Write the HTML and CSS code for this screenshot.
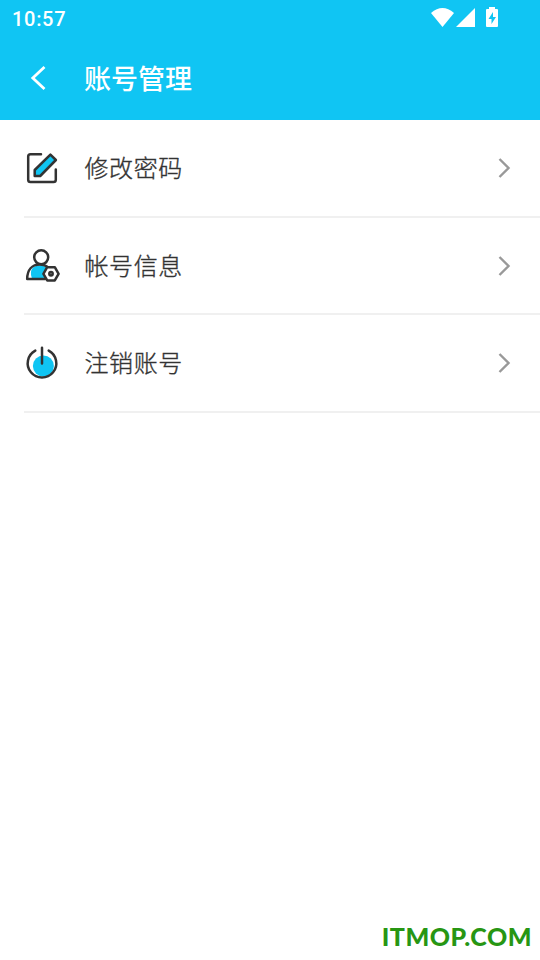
FILE: index.html
```html
<!DOCTYPE html>
<html lang="zh-CN">
<head>
<meta charset="utf-8">
<title>账号管理</title>
<link rel="stylesheet" href="styles.css">
</head>
<body>
<header class="header">
  <div class="status">
    <span class="time">10:57</span>
    <svg class="status-icons" width="70" height="36" viewBox="430 0 70 36" fill="#fff">
      <path d="M442.5 27 431 13Q442.500 3 454 13Z"/>
      <path d="M475 8V27H456Z"/>
      <path fill-rule="evenodd" d="M489 7h6v2h2q1 0 1 1v16q0 1-1 1h-10q-1 0-1-1v-16q0-1 1-1h2ZM493 12l-4.500 7h3v5l4.500-7h-3Z"/>
    </svg>
  </div>
  <div class="titlebar">
    <svg class="back" width="20" height="30" viewBox="0 0 20 30"><path d="M16.500 4 4.800 15l11.700 11"/></svg>
    <h1 class="title">账号管理</h1>
  </div>
</header>
<main class="list">
  <div class="row">
    <svg class="icon" width="36" height="36" viewBox="24 150 36 36">
      <path d="M41 154.300H30.500Q28.200 154.300 28.200 156.600V179.700Q28.200 182 30.500 182H53.500Q55.800 182 55.800 179.700V169.500"/>
      <path class="accent" d="M34.700 176V170L50.400 154.600 55.900 160 40.200 176Z"/>
    </svg>
    <span class="label">修改密码</span>
    <svg class="arrow" width="14" height="24" viewBox="0 0 14 24"><path d="M1.500 3l9 9-9 9"/></svg>
  </div>
  <div class="row row-info">
    <svg class="icon" width="36" height="36" viewBox="24 248 36 36">
      <path class="fill" d="M31.800 278Q29.500 271.500 33 267.500 36 265 42 265.500L47 267.500 43.500 273 46 278Z"/>
      <circle cx="41.200" cy="257.300" r="7"/>
      <path d="M45 279H27.200C27.200 270 32 264.500 40 264.500Q44 264.500 47 266.500"/>
      <path class="hex" d="M47.200 267.200H54.800L58.600 273.800 54.800 280.400H47.200L43.400 273.800Z"/>
      <circle cx="51" cy="273.800" r="1.700"/>
    </svg>
    <span class="label">帐号信息</span>
    <svg class="arrow" width="14" height="24" viewBox="0 0 14 24"><path d="M1.500 3l9 9-9 9"/></svg>
  </div>
  <div class="row">
    <svg class="icon" width="36" height="36" viewBox="24 345 36 36">
      <circle class="fill" cx="43.400" cy="366" r="10.500"/>
      <path d="M35.300 350.600A14.300 14.300 0 1 0 48.700 350.600M42 347.800V363.500"/>
    </svg>
    <span class="label">注销账号</span>
    <svg class="arrow" width="14" height="24" viewBox="0 0 14 24"><path d="M1.500 3l9 9-9 9"/></svg>
  </div>
</main>
<footer class="brand">ITMOP.COM</footer>
</body>
</html>
```
FILE: styles.css
```css
* { box-sizing: border-box; }
body {
  margin: 0;
  height: 960px;
  display: flex;
  flex-direction: column;
  overflow: hidden;
  background: #fff;
  color: #333;
  font-family: "Noto Sans CJK SC", sans-serif;
}
.header { height: 120px; background: #10c5f3; color: #fff; }
.status {
  height: 36px;
  padding: 0 40px 0 12px;
  display: flex;
  justify-content: space-between;
}
.time { font: 500 20px/38px Roboto, sans-serif; letter-spacing: 0.7px; }
.titlebar { height: 84px; display: flex; align-items: center; padding-left: 28px; }
.back { fill: none; stroke: #fff; stroke-width: 2.8; }
.title { margin: 0 0 0 36px; font-size: 27px; line-height: 40px; font-weight: 500; }
.list { flex: 1; padding-left: 24px; }
.row {
  height: 97.5px;
  display: flex;
  align-items: center;
  padding-right: 28px;
  border-bottom: 2px solid #f0f0f0;
}
.row-info { padding-top: 2px; }
.icon { fill: none; stroke: #333; stroke-width: 2.5; stroke-linecap: round; stroke-linejoin: round; }
.accent { fill: #10c5f3; }
.fill { fill: #10c5f3; stroke: none; }
.hex { fill: #fff; }
.label {
  margin-left: 24.5px;
  padding-bottom: 2px;
  flex: 1;
  font-size: 24px;
  line-height: 36px;
  letter-spacing: 0.6px;
  font-weight: 300;
  -webkit-text-stroke: 0.35px #333;
}
.arrow { fill: none; stroke: #999; stroke-width: 2.4; }
.brand {
  height: 47px;
  padding-right: 8px;
  text-align: right;
  color: #279613;
  font: 900 25px/46px Lato, sans-serif;
  letter-spacing: 0.5px;
}
```
